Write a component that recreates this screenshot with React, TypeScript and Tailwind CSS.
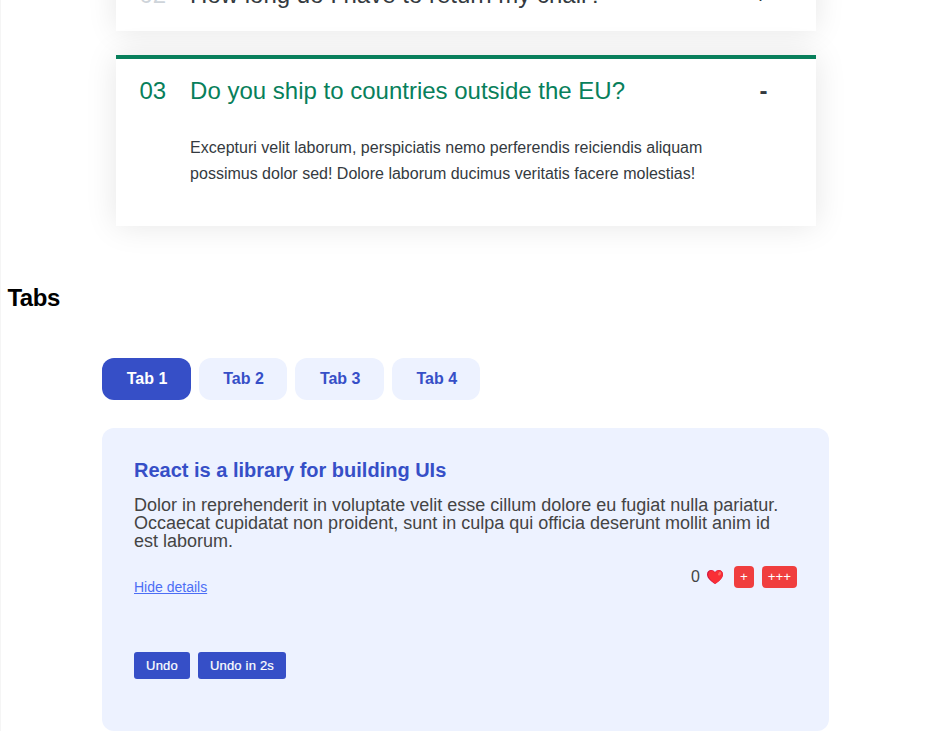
import { useState } from "react";

function HeartIcon() {
  return (
    <svg width="16" height="14" viewBox="0 0 16 14" aria-hidden="true">
      <path d="M8 14C5 12 0 8.500 0 4.400 0 1.800 1.800 0 4.100 0 5.800 0 7.200.900 8 2.200 8.800.900 10.200 0 11.900 0 14.200 0 16 1.800 16 4.400 16 8.500 11 12 8 14Z" fill="#d3123f" />
      <path d="M8.400 13.700C5.500 11.800 1.200 8.200 1.200 4.400 1.200 2 2.600.500 4.500.400 6.200.400 7.300 1.500 8 2.700 8.800 1.300 10.200.300 11.900.300 14.100.300 15.800 2 15.800 4.400 15.800 8 11.500 11.800 8.400 13.700Z" fill="#f92f36" />
      <ellipse cx="12.600" cy="3.700" rx="1.300" ry="2" transform="rotate(35 12.600 3.700)" fill="#fb6a60" />
    </svg>
  );
}

type ItemProps = { num: string; title: string; open?: boolean; text?: string };

function AccordionItem({ num, title, open, text }: ItemProps) {
  return (
    <div
      className={`grid grid-cols-[auto_1fr_auto] items-center gap-x-6 gap-y-8 border-t-4 pl-[23.4px] pr-[48.6px] pt-5 text-[24px] leading-6 shadow-[0_0_30px_rgba(0,0,0,0.1)] ${
        open ? "border-[#087f5b] pb-[39.8px] text-[#087f5b]" : "border-white pb-6 text-[#343a40]"
      } bg-white`}
    >
      <p className={open ? "" : "text-[#ced4da]"}>{num}</p>
      <p>{title}</p>
      <p className={open ? "font-bold text-[#343a40]" : "text-[#343a40]"}>{open ? "-" : "+"}</p>
      {open && (
        <div className="col-span-2 col-start-2 text-base leading-[1.6] text-[#343a40]">
          {text}
        </div>
      )}
    </div>
  );
}

const tabs = ["Tab 1", "Tab 2", "Tab 3", "Tab 4"];

export default function App() {
  const [active, setActive] = useState(0);
  const [likes, setLikes] = useState(0);

  return (
    <div className="h-[731px] overflow-hidden border-l border-[#f5f5f5] bg-white font-['Liberation_Sans',Arial,sans-serif] text-black">
      <div className="-mt-[41px] ml-[115px] flex w-[700px] flex-col gap-6">
        <AccordionItem num="02" title="How long do I have to return my chair?" />
        <AccordionItem
          num="03"
          title="Do you ship to countries outside the EU?"
          open
          text="Excepturi velit laborum, perspiciatis nemo perferendis reiciendis aliquam possimus dolor sed! Dolore laborum ducimus veritatis facere molestias!"
        />
      </div>

      <h2 className="ml-[6.4px] mt-[58px] text-[24px] font-bold leading-7 tracking-[-0.4px]">Tabs</h2>

      <div className="ml-[101px] mt-[46px] w-[727px]">
        <div className="flex gap-2">
          {tabs.map((tab, i) => (
            <button
              key={tab}
              onClick={() => setActive(i)}
              className={`h-[42px] rounded-xl pl-[24.7px] pr-[23.3px] pt-px text-base font-bold leading-none ${
                i === active ? "bg-[#364fc7] text-white" : "bg-[#edf2ff] text-[#364fc7]"
              }`}
            >
              {tab}
            </button>
          ))}
        </div>

        <div className="mt-7 h-[303px] rounded-xl bg-[#edf2ff] p-8 text-[#444]">
          <h4 className="text-[20px] font-bold leading-5 text-[#364fc7]">
            React is a library for building UIs
          </h4>
          <p className="mt-4 text-[18px] leading-[18px]">
            Dolor in reprehenderit in voluptate velit esse cillum dolore eu fugiat nulla pariatur.
            Occaecat cupidatat non proident, sunt in culpa qui officia deserunt mollit anim id est
            laborum.
          </p>

          <div className="mt-4 flex h-[30px] items-start justify-between">
            <button className="mt-[13px] text-[14px] leading-4 text-[#4c6ef5] underline">
              Hide details
            </button>
            <div className="flex items-center gap-2">
              <span className="-mr-px text-base leading-none">{likes}</span>
              <span className="mr-[3px]">
                <HeartIcon />
              </span>
              <button
                onClick={() => setLikes(likes + 1)}
                className="h-[22px] rounded bg-[#f03e3e] px-1.5 text-[13.3px] leading-none text-white"
              >
                +
              </button>
              <button
                onClick={() => setLikes(likes + 3)}
                className="h-[22px] rounded bg-[#f03e3e] px-1.5 text-[13.3px] leading-none text-white"
              >
                +++
              </button>
            </div>
          </div>

          <div className="mt-14 flex gap-2">
            <button
              onClick={() => setLikes(0)}
              className="h-[27px] w-14 rounded-[3px] bg-[#364fc7] text-[13px] font-medium leading-none tracking-[0.2px] text-white [-webkit-text-stroke:0.2px_white]"
            >
              Undo
            </button>
            <button
              onClick={() => setTimeout(() => setLikes(0), 2000)}
              className="h-[27px] w-[88px] rounded-[3px] bg-[#364fc7] text-[13px] font-medium leading-none tracking-[0.2px] text-white [-webkit-text-stroke:0.2px_white]"
            >
              Undo in 2s
            </button>
          </div>
        </div>
      </div>
    </div>
  );
}
